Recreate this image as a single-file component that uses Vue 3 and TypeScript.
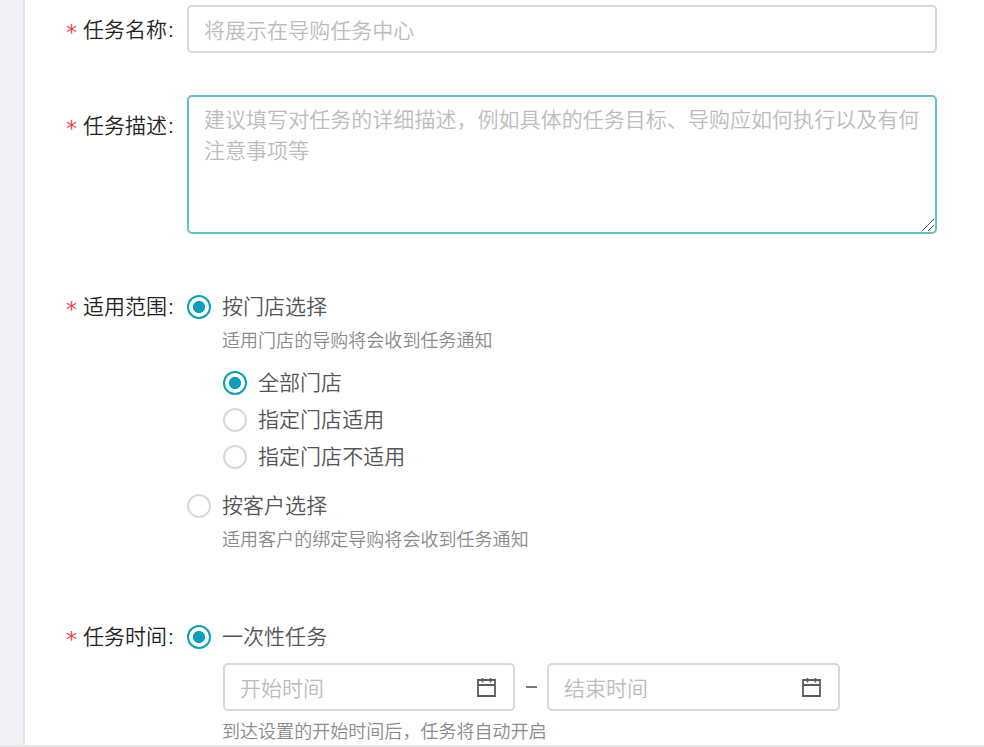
<script setup lang="ts">
import { ref } from 'vue'

const name = ref('')
const description = ref('')
const scope = ref('store')
const store = ref('all')
const timing = ref('once')
const start = ref('')
const end = ref('')

const storeOptions = [
  { value: 'all', label: '全部门店' },
  { value: 'include', label: '指定门店适用' },
  { value: 'exclude', label: '指定门店不适用' },
]
</script>

<template>
  <div class="page">
    <aside class="side"></aside>
    <form class="form">
      <div class="row row-name">
        <div class="label"><span class="star">*</span><span class="caption">任务名称</span><span class="colon">:</span></div>
        <input v-model="name" class="field" type="text" placeholder="将展示在导购任务中心" />
      </div>

      <div class="row row-desc">
        <div class="label"><span class="star">*</span><span class="caption">任务描述</span><span class="colon">:</span></div>
        <div class="area">
          <textarea v-model="description" class="field" placeholder="建议填写对任务的详细描述，例如具体的任务目标、导购应如何执行以及有何注意事项等"></textarea>
          <svg class="grip" width="12" height="12" viewBox="0 0 12 12">
            <path d="M0 12L12 0M6 12L12 6" stroke="#55555b" stroke-width="1" />
          </svg>
        </div>
      </div>

      <div class="row row-scope">
        <div class="label"><span class="star">*</span><span class="caption">适用范围</span><span class="colon">:</span></div>
        <div class="content">
          <label class="option"><input v-model="scope" class="radio" type="radio" value="store" /><span class="text">按门店选择</span></label>
          <div class="nested">
            <p class="hint">适用门店的导购将会收到任务通知</p>
            <div class="stores">
              <label v-for="o in storeOptions" :key="o.value" class="option">
                <input v-model="store" class="radio" type="radio" :value="o.value" /><span class="text">{{ o.label }}</span>
              </label>
            </div>
          </div>
          <label class="option"><input v-model="scope" class="radio" type="radio" value="customer" /><span class="text">按客户选择</span></label>
          <div class="nested">
            <p class="hint">适用客户的绑定导购将会收到任务通知</p>
          </div>
        </div>
      </div>

      <div class="row row-time">
        <div class="label"><span class="star">*</span><span class="caption">任务时间</span><span class="colon">:</span></div>
        <div class="content">
          <label class="option"><input v-model="timing" class="radio" type="radio" value="once" /><span class="text">一次性任务</span></label>
          <div class="nested">
            <div class="range">
              <div class="picker picker-start">
                <input v-model="start" type="text" placeholder="开始时间" />
                <svg class="calendar" width="19" height="19" viewBox="0 0 19 19" fill="none" stroke="#5c5c5c">
                  <path d="M1 2h17v16H1zM1 7h17" stroke-width="1.8" />
                  <path d="M5.5 0v4.5M13.5 0v4.5" stroke-width="1.6" />
                </svg>
              </div>
              <span class="dash"></span>
              <div class="picker picker-end">
                <input v-model="end" type="text" placeholder="结束时间" />
                <svg class="calendar" width="19" height="19" viewBox="0 0 19 19" fill="none" stroke="#5c5c5c">
                  <path d="M1 2h17v16H1zM1 7h17" stroke-width="1.8" />
                  <path d="M5.5 0v4.5M13.5 0v4.5" stroke-width="1.6" />
                </svg>
              </div>
            </div>
            <p class="hint">到达设置的开始时间后，任务将自动开启</p>
          </div>
        </div>
      </div>
    </form>
  </div>
</template>

<style>
body {
  overflow: hidden;
}
</style>

<style scoped>
.page,
.page * {
  box-sizing: border-box;
}
.page {
  display: flex;
  width: 984px;
  height: 747px;
  overflow: hidden;
  background: #fff;
  border-bottom: 2px solid #e8e8e9;
  font-family: "Noto Sans CJK SC", sans-serif;
  font-weight: 350;
  font-size: 21px;
  letter-spacing: 0.04px;
  color: #555;
}
.side {
  flex: none;
  width: 25px;
  background: #f0f1f6;
  border-right: 2px solid #e5e5e9;
}
.form {
  flex: 1;
  padding: 5px 47px 0 41px;
}
.row {
  display: grid;
  grid-template-columns: 121px 1fr;
  align-items: start;
}
.row-desc {
  margin-top: 42px;
}
.row-scope {
  margin-top: 57px;
}
.row-time {
  margin-top: 69px;
}
.label {
  display: flex;
  align-items: center;
  height: 32px;
  padding-bottom: 4px;
  color: #222;
  line-height: 28px;
  white-space: nowrap;
}
.row-name .label {
  margin-top: 9px;
}
.row-desc .label {
  margin-top: 15px;
}
.star {
  width: 17px;
  padding-top: 10px;
  color: #f8404c;
  font-family: "DejaVu Sans", sans-serif;
  font-weight: 400;
  font-size: 22px;
  line-height: 28px;
}
.colon {
  padding-left: 1px;
  font-weight: 300;
}
.field,
.picker {
  border: 2px solid #d9d9d9;
  border-radius: 5px;
  background: #fff;
}
.field {
  display: block;
  width: 100%;
  height: 48px;
  padding: 0 15px 1px;
  font: inherit;
  letter-spacing: inherit;
  color: #555;
  outline: none;
}
.area {
  position: relative;
}
textarea.field {
  height: 139px;
  padding: 6px 14px 7px 15px;
  border-color: #63c0cb;
  line-height: 31px;
  resize: none;
}
input::placeholder,
textarea::placeholder {
  color: #bcbcbc;
  opacity: 1;
}
.grip {
  position: absolute;
  right: 3px;
  bottom: 3px;
}
.option {
  display: flex;
  align-items: center;
  gap: 11px;
  height: 32px;
}
.text {
  padding-bottom: 4px;
  line-height: 28px;
}
.radio {
  flex: none;
  appearance: none;
  width: 24px;
  height: 24px;
  margin: 0;
  border: 2px solid #d9d9d9;
  border-radius: 50%;
  background: #fff;
}
.radio:checked {
  border-color: #0aa0bc;
  background: radial-gradient(circle, #0aa0bc 5.7px, transparent 6.3px);
}
.nested {
  padding-left: 36px;
}
.hint {
  margin: 2px 0 0 -1px;
  font-size: 18px;
  line-height: 28px;
  color: #8a8a8a;
}
.stores {
  margin: 11px 0 15px;
}
.stores .option {
  height: 37px;
}
.range {
  display: flex;
  align-items: center;
  margin-top: 10px;
}
.picker {
  display: flex;
  align-items: center;
  height: 48px;
  padding: 0 17px 0 15px;
}
.picker-start {
  width: 292px;
}
.picker-end {
  width: 293px;
}
.picker input {
  flex: 1;
  min-width: 0;
  height: 44px;
  padding: 0;
  border: 0;
  outline: none;
  font: inherit;
  letter-spacing: inherit;
}
.calendar {
  flex: none;
}
.dash {
  width: 11px;
  height: 2px;
  margin: 0 10px 0 11px;
  background: #777;
}
.range + .hint {
  margin-top: 5px;
}
</style>
